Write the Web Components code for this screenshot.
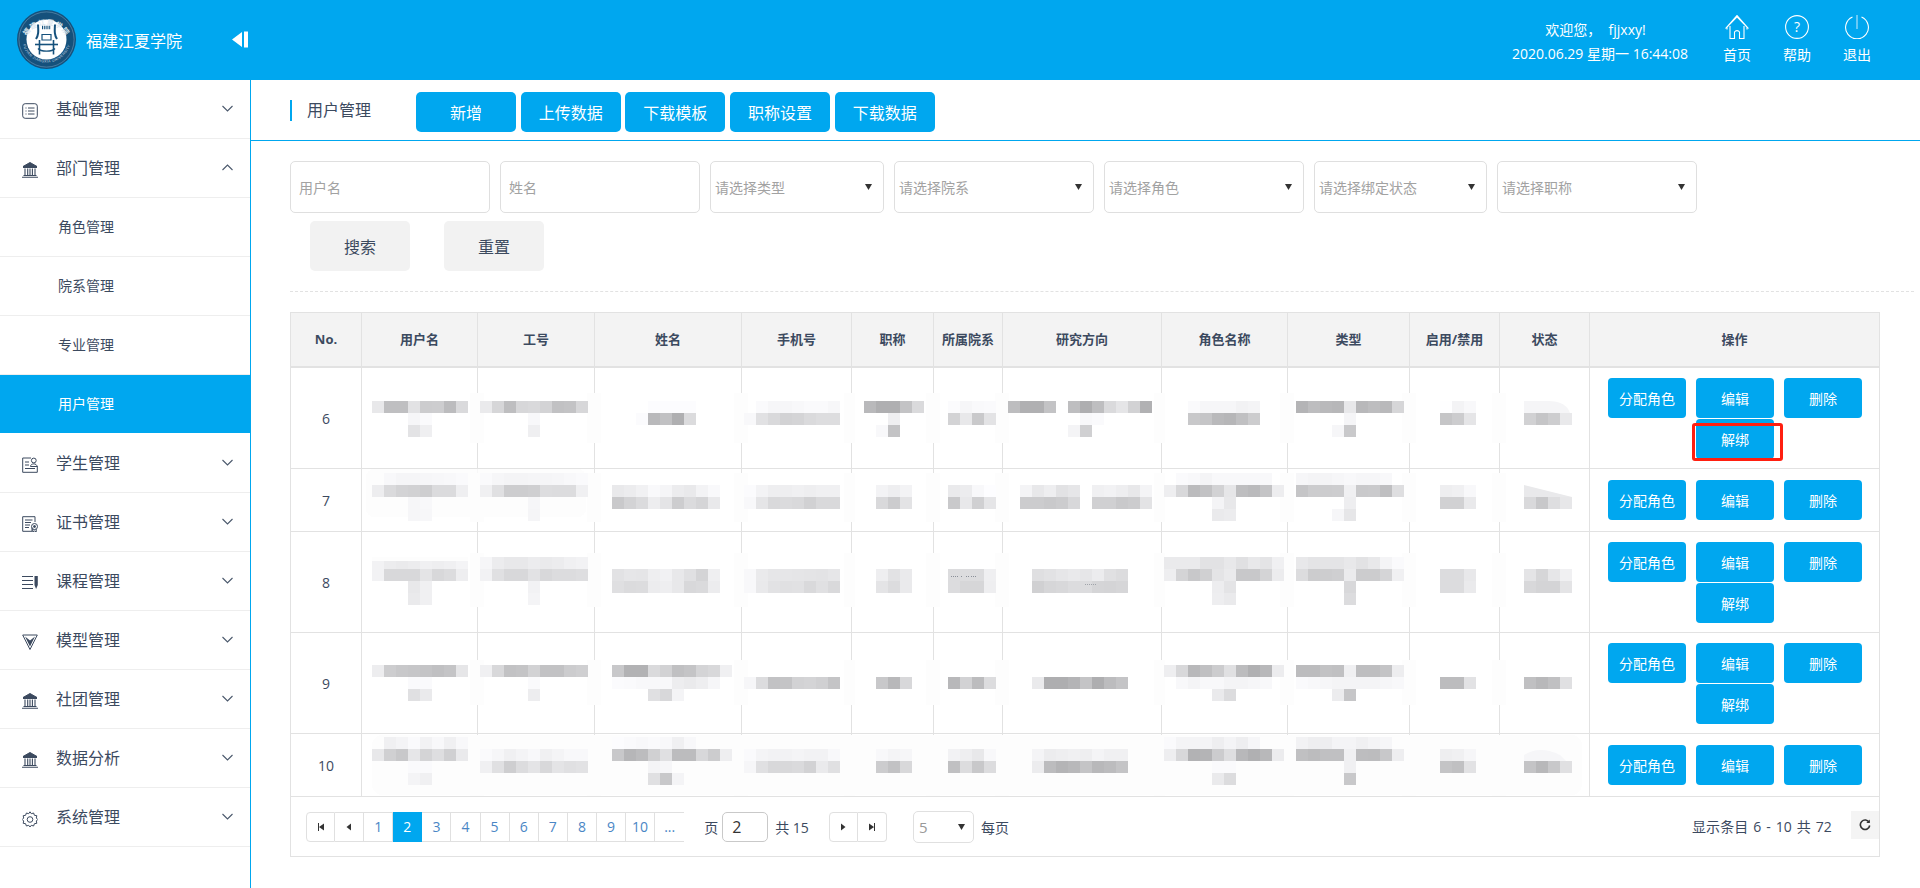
<!DOCTYPE html>
<html lang="zh-CN">
<head>
<meta charset="utf-8">
<title>用户管理</title>
<style>
html,body{margin:0;padding:0;background:#fff;width:1920px;height:888px;overflow:hidden;font-family:"Open Sans","Noto Sans CJK SC",sans-serif;color:#3c4a5f}
</style>
</head>
<body>
<app-shell>
  <app-header slot="header"></app-header>
  <side-nav slot="nav">
    <nav-item icon="list">基础管理</nav-item>
    <nav-item icon="bank" open>部门管理</nav-item>
    <nav-sub>角色管理</nav-sub>
    <nav-sub>院系管理</nav-sub>
    <nav-sub>专业管理</nav-sub>
    <nav-sub active>用户管理</nav-sub>
    <nav-item icon="student">学生管理</nav-item>
    <nav-item icon="cert">证书管理</nav-item>
    <nav-item icon="course">课程管理</nav-item>
    <nav-item icon="model">模型管理</nav-item>
    <nav-item icon="bank">社团管理</nav-item>
    <nav-item icon="bank">数据分析</nav-item>
    <nav-item icon="gear">系统管理</nav-item>
  </side-nav>
  <page-toolbar slot="main" title="用户管理">
    <blue-btn>新增</blue-btn><blue-btn>上传数据</blue-btn><blue-btn>下载模板</blue-btn><blue-btn>职称设置</blue-btn><blue-btn>下载数据</blue-btn>
  </page-toolbar>
  <filter-bar slot="main">
    <filter-field w="200" pad="9">用户名</filter-field>
    <filter-field w="200" pad="9">姓名</filter-field>
    <filter-field w="174" select>请选择类型</filter-field>
    <filter-field w="200" select>请选择院系</filter-field>
    <filter-field w="200" select>请选择角色</filter-field>
    <filter-field w="173" select>请选择绑定状态</filter-field>
    <filter-field w="200" select>请选择职称</filter-field>
    <gray-btn slot="actions">搜索</gray-btn>
    <gray-btn slot="actions">重置</gray-btn>
  </filter-bar>
  <data-table slot="main"></data-table>
</app-shell>

<script>
function comp(name, css, html, init){
  customElements.define(name, class extends HTMLElement{
    connectedCallback(){
      if(this.shadowRoot) return;
      const r=this.attachShadow({mode:'open'});
      r.innerHTML='<style>'+css+'</style>'+(typeof html==='function'?html(this):html);
      if(init) init(this,r);
    }
  });
}
const BLUE='#00a7ef';

comp('app-shell',`
:host{display:flex;flex-direction:column;width:1920px;height:888px}
.body{display:flex;flex:1;min-height:0}
.nav{display:block;width:250px;border-right:1px solid ${BLUE};flex:none}
.main{flex:1;min-width:0;display:flex;flex-direction:column}
`,`<slot name="header"></slot><div class="body"><div class="nav"><slot name="nav"></slot></div><div class="main"><slot name="main"></slot></div></div>`);

comp('app-header',`
:host{display:flex;height:80px;background:${BLUE};color:#fff;align-items:stretch;font-size:14px}
.logo{width:59px;height:59px;margin:10px 0 0 17px;flex:none}
.name{font-size:16px;margin-left:10px;line-height:22px;padding-top:30px;width:146px;flex:none}
.toggle{width:17px;height:17px;margin-top:31px;flex:none}
.sp{flex:1}
.welcome{display:flex;flex-direction:column;align-items:center;width:190px;padding-top:18px;line-height:24px;margin-right:12px;flex:none;white-space:pre}
.welcome div:first-child{margin-right:9px}
.acts{display:flex;padding-right:33px}
.act{width:60px;display:flex;flex-direction:column;align-items:center;padding-top:15px}
.act svg{width:24px;height:24px;display:block}
.act span{margin-top:6px;line-height:20px}
`,`
<svg class="logo" viewBox="0 0 59 59">
  <defs>
    <path id="ringTop" d="M7 33 A23 23 0 0 1 52 33"/>
    <path id="ringBot" d="M5.500 33 A24.500 24.500 0 0 0 53.500 33"/>
  </defs>
  <circle cx="29.500" cy="29.500" r="29.500" fill="#15517c"/>
  <circle cx="29.500" cy="29.500" r="27.600" fill="none" stroke="#7fa6c2" stroke-width=".5"/>
  <circle cx="29.500" cy="29.500" r="20" fill="#fff"/>
  <text font-family="Noto Sans CJK SC" font-size="7" font-weight="700" fill="#dfe9f0" letter-spacing="1"><textPath href="#ringTop" startOffset="50%" text-anchor="middle">福建江夏学院</textPath></text>
  <text font-family="Liberation Sans" font-size="3.600" fill="#cfdde8" letter-spacing=".4"><textPath href="#ringBot" startOffset="50%" text-anchor="middle">FUJIAN JIANGXIA UNIVERSITY</textPath></text>
  <g fill="none" stroke="#15517c" stroke-width="2">
    <path d="M21 14.500C21.500 22 21.500 25 19 29"/><path d="M38 14.500C37.500 22 37.500 25 40 29"/>
    <path d="M18 34.500H41" stroke-width="1.600"/>
    <path d="M22.500 30V44.500M36.500 30V44.500" stroke-width="1.600"/>
    <path d="M25 24.500H34V30H25Z" stroke-width="1.200"/>
    <path d="M25 17.500H34" stroke-dasharray="1.200 1" stroke-width="3.500"/>
    <path d="M21 38.500C24 42 35 42 38 38.500" stroke-width="1.300"/>
  </g>
</svg>
<div class="name">福建江夏学院</div>
<svg class="toggle" viewBox="0 0 17 17"><path d="M10 1V16L0 8.500Z M12 0.500H16V16.500H12Z" fill="#fff"/></svg>
<div class="sp"></div>
<div class="welcome"><div>欢迎您，  fjjxxy!</div><div>2020.06.29 星期一 16:44:08</div></div>
<div class="acts">
  <div class="act"><svg viewBox="0 0 24 24" fill="none" stroke="#fff" stroke-width="1.100"><path d="M.5 13.500 12 .5 23.500 13.500M2 14.500V12L12 1.800 22 12V14.500"/><path d="M5 11V23.500H9.500V17A3 3 0 0 1 14.500 17V23.500H19V11"/></svg><span>首页</span></div>
  <div class="act"><svg viewBox="0 0 24 24" fill="none" stroke="#fff" stroke-width="1.100"><circle cx="12" cy="12" r="11.400"/><text x="12" y="17" text-anchor="middle" font-size="14" font-family="Open Sans" fill="#fff" stroke="none">?</text></svg><span>帮助</span></div>
  <div class="act"><svg viewBox="0 0 24 24" fill="none" stroke="#fff" stroke-width="1.100"><path d="M7.500 2A11.400 11.400 0 1 0 16.500 2"/><path d="M12 0V14" stroke="#bfe8fb"/></svg><span>退出</span></div>
</div>`);

comp('side-nav',`:host{display:block}`,`<slot></slot>`);

const ICONS={
 list:'<rect x=".7" y=".7" width="14.600" height="14.600" rx="2.500"/><path d="M3.500 5H4.500M6 5H12.500M3.500 8H4.500M6 8H12.500M3.500 11H4.500M6 11H12.500"/>',
 bank:'<path d="M8 .5 15 4.500H1Z" fill="currentColor"/><path d="M1 5.500H15" /><path d="M3 6.500V13M5.700 6.500V13M8 6.500V13M10.400 6.500V13M13 6.500V13" stroke-width="1.100"/><path d="M1.500 13.500H14.500M0 15.300H16" stroke-width="1.100"/>',
 student:'<path d="M9 1H.7V15.300H15.300V9"/><circle cx="11.800" cy="3.500" r="2.400"/><path d="M8.500 9.500C8.500 6 15 6 15 9.500ZM3 5H7M3 8H7M3 11.500H13"/>',
 cert:'<path d="M10 11.500V15.300H.7V.7H13V6"/><path d="M3 4H10.500M3 6.500H9M3 9H8M3 11.500H7"/><circle cx="12.500" cy="10.500" r="3"/><circle cx="12.500" cy="10.500" r="1" fill="currentColor"/><path d="M10.800 13V16L12.500 15 14.200 16V13"/>',
 course:'<path d="M0 1.500H11M0 5.500H11M0 9.500H11M0 13.500H11" stroke-width="1.100"/><path d="M12.500 1H15.800V10L14.100 14 12.500 10Z" fill="currentColor" stroke="none"/>',
 model:'<path d="M.7 1H15.300L8 15.500Z"/><path d="M3 2.500 8 6.500 13 2.500 8 12.500Z" fill="currentColor" stroke="none"/><path d="M5.500 3 8 4.800 10.500 3" stroke="#fff"/>',
 gear:'<path d="M8 .8 9.300 2.700 11.600 2 12.400 4.300 14.800 4.700 14.300 7 15.800 8.500 14.300 10 14.800 12.300 12.400 12.700 11.600 15 9.300 14.300 8 16 6.700 14.300 4.400 15 3.600 12.700 1.200 12.300 1.700 10 .2 8.500 1.700 7 1.200 4.700 3.600 4.300 4.400 2 6.700 2.700Z" stroke-linejoin="round"/><circle cx="8" cy="8.500" r="2.800"/>'
};
comp('nav-item',`
:host{display:flex;align-items:center;height:58px;border-bottom:1px solid #eeeeee;color:#3c4a5f;font-size:16px;padding-left:22px;box-sizing:content-box}
svg.i{width:16px;height:16px;flex:none;margin-right:18px;fill:none;stroke:currentColor;stroke-width:1;position:relative;top:2px}
.t{flex:1;line-height:22px}
svg.c{width:11px;height:7px;margin-right:17px;fill:none;stroke:#4a586c;stroke-width:1.100;flex:none;position:relative;top:-1px}
`,h=>`<svg class="i" viewBox="0 0 16 16">${ICONS[h.getAttribute('icon')]}</svg><div class="t"><slot></slot></div><svg class="c" viewBox="0 0 11 7"><path d="${h.hasAttribute('open')?'M.5 6 5.500 1 10.500 6':'M.5 1 5.500 6 10.500 1'}"/></svg>`);

comp('nav-sub',`
:host{display:flex;align-items:center;height:56px;padding-bottom:2px;border-bottom:1px solid #eeeeee;font-size:14px;padding-left:58px;color:#3c4a5f}
:host([active]){background:${BLUE};color:#fff;border-bottom-color:#fff}
`,`<slot></slot>`);

comp('page-toolbar',`
:host{display:flex;align-items:center;height:60px;border-bottom:1px solid ${BLUE};padding-left:39px;flex:none}
.title{border-left:2px solid ${BLUE};padding-left:15px;width:109px;height:21px;line-height:21px;font-size:16px;color:#3c4a5f;flex:none;white-space:nowrap}
.btns{display:flex;gap:4.700px;margin-top:4px}
`,h=>`<div class="title">${h.getAttribute('title')}</div><div class="btns"><slot></slot></div>`);

comp('blue-btn',`
:host{display:flex;align-items:center;justify-content:center;width:100px;height:40px;background:${BLUE};border-radius:5px;color:#fff;font-size:16px;flex:none}
`,`<slot></slot>`);

comp('gray-btn',`
:host{display:flex;align-items:center;justify-content:center;width:100px;height:50px;background:#f2f2f2;border-radius:5px;color:#3c4a5f;font-size:16px;flex:none}
`,`<slot></slot>`);

comp('filter-bar',`
:host{display:block;padding:20px 6px 0 39px;flex:none}
.row{display:flex;gap:10px}
.acts{display:flex;gap:34px;margin:8px 0 0 20px}
.dash{border-top:1px dashed #e2e2e2;margin-top:20px}
`,`<div class="row"><slot></slot></div><div class="acts"><slot name="actions"></slot></div><div class="dash"></div>`);

comp('filter-field',`
:host{display:flex;align-items:center;justify-content:space-between;height:52px;box-sizing:border-box;border:1px solid #dfdfdf;border-radius:5px;color:#a2a2a2;font-size:14px;flex:none}
svg{width:7px;height:6px;margin-right:11px;flex:none}
`,h=>{
  h.style.width=h.getAttribute('w')+'px';
  const sel=h.hasAttribute('select');
  h.style.paddingLeft=(h.getAttribute('pad')||5)-1+'px';
  return `<div><slot></slot></div>`+(sel?`<svg viewBox="0 0 7 6"><path d="M0 0H7L3.500 6Z" fill="#333"/></svg>`:'');
});

comp('op-btn',`
:host{display:flex;align-items:center;justify-content:center;width:78px;height:40px;background:${BLUE};border-radius:4px;color:#fff;font-size:14px;flex:none;position:relative}
.mark{position:absolute;left:-4px;top:4px;width:91px;height:38px;box-sizing:border-box;border:3px solid #ff1f10;border-radius:3px}
`,h=>`<slot></slot>`+(h.hasAttribute('marked')?'<div class="mark"></div>':''));

comp('mosaic-overlay',`
:host{display:block;position:absolute;left:0;top:0;width:1590px;height:545px;pointer-events:none}
svg{display:block}
`,()=>{
 const D=`
401 372 e8 bf bf e2 cc cd bc da|413 408 f6 fa|425 408 e3 ef|401 480 ea d6 be d7 d9 d3 c1 c3 d7|413 528 f8|425 528 ef
401 648 fc fc fc fc|413 636 fb b9 c1 af db|401 756 fa f6 f6 f8 fa fa f7|413 744 f8 e1 d9 d2 d4 da dd dd
401 864 b9 af af c3 da|413 888 ef|425 876 f8 c3|401 948 fb f6 f9 fa|413 948 d3 e8 c9 e3
401 1008 bd b0 b0 c3|401 1068 be ae be da e5 d2 b1|413 1080 f8 fa|425 1068 f4 d0
401 1188 fa f6 f6 f6 f2 f4|413 1188 c8 c5 b9 b6 c0 cc|401 1296 b4 bd b9 b7 e8 b8 bd b9 d6|413 1344 f5|425 1332 f6 c9
401 1440 fe f3 f8|413 1440 c5 cc e5|413 1524 d1 c5 cd e9
473 384 f8 f5 f5 f6 f7 f8 fa|485 372 ed da d3 d1 ce db db ef|497 408 f6 f8|509 408 f6 f7|473 480 fa f6 f4 f4 f5 f5 f6 f8 fa|485 480 f0 e0 cd cd cf dd dc dc f0|497 528 f6|509 528 f5
485 612 e9 ec f1 f9 f5 ec e9 f3 f9|497 612 c9 d3 db ed e4 cd db d5 e9|485 744 fb f3 ee ee f0 ee f0 f0|497 744 f8 e5 d9 db d9 d1 d9 d9
485 876 f3 ee f3|497 876 d9 cc e3|485 948 ea ec f8 fd|497 948 c9 e8 d0 e5
485 1020 f4 e8 ee e2 e6 ff f0 f2 ee e8 f4|497 1020 cc cc c9 cc d8 ff d0 d0 c9 cc e3
473 1176 fa f8 f4 f8 f8 f8 f8 f8|485 1164 ee d8 bb c2 d2 e6 be ba c4 ed|497 1212 f4 e8|509 1212 ea ec
473 1296 f6 f4 f4 f6 f8 f6 f6 f8|485 1296 c5 cc cc cd f0 c9 ca bf de|497 1344 ee|509 1332 f6 e6
485 1440 ee f0 f8|497 1440 d1 d1 e9|497 1524 d9 c8 de e7
557 372 f2 ec ea ec f0 ee f0 f4|569 372 f2 d8 d8 d8 e4 d8 dc ee|581 408 e8 f0|593 408 ea f0|557 480 f6 ec e8 e8 ec ea ec f0 f2|569 480 f2 e0 d8 d8 e2 d8 dc dc de|581 528 f2|593 528 f4
569 612 e2 e6 e5 ee f1 e8 e0 d4 ef|581 612 df db dc ec ee e8 d8 da ec|569 744 f8 ea e6 e6 e5 e4 e3 e6|581 744 f8 e9 e2 e0 e1 d9 e0 d9
569 876 ee e2 ea|581 876 e4 dc ea|569 948 dc dc dc ef|581 948 dc d6 d6 ee
569 1032 df e2 e6 e9 e6 ec e0 dc|581 1032 d0 d6 d8 dc dc d5 d4 d6
557 1164 ea ea ea e2 e2 e8 e0 e8 e4 f0|569 1164 ee d4 c8 d0 e4 ea c8 c8 d4 ec|581 1212 ed e4|593 1212 ee ea
557 1296 e8 e4 e4 e4 e8 e2 e8 f4 fa|569 1296 dc cc cd cf eb cc cc d5 f0|581 1344 d8|593 1344 dc
569 1440 dc dc e8|581 1440 dc dc ea|569 1524 e4 d6 e6 f0|581 1524 d8 d4 d4 e4
665 372 ed cd c8 c6 c4 c0 c4 e6|677 408 fa fa|689 408 e0 ea|665 480 f0 d8 c2 c4 d2 c2 c2 cc cf|677 528 fa|689 528 ed
665 612 c8 b2 b2 da d2 c0 c4 d4 d8 f0|677 612 fb fa f8 f8 f8 ed ea ee f6|689 648 e0 d8 f4|677 744 f6 dc c2 c4 d2 d4 d0 c4
677 876 c8 b8 d8|677 948 b8 d2 bc dc|677 1032 ea ae ae b4 c4 ae bc c4
665 1164 ee d8 b8 c0 cc e0 bc b0 b8 ec|677 1176 f8 f4 f8 f8 f4 f4 f6 f8|689 1212 ea dc
665 1296 bc bc c2 c0 f0 be be c4 ed|677 1296 fa f8 f6 f4 f4 f4 f4 f6 f8|689 1332 ec c6
677 1440 bc bc e2|677 1524 c0 b8 c0 e0
737 384 f0 f4 fa f2 f8 f0 f8|749 372 e8 d0 c8 e6 d4 de d0 ea|761 408 fa fa|773 408 f4 f0|749 480 fa f6 f0 f4 f8 f0 f4 f8 f8|761 480 f0 e0 ce dc e4 d8 e4 e0 e2
737 612 fc fa f8 fa f8 f0 f8|749 612 c8 b6 bc d0 e0 bc bc d8 cc ee|761 648 f4 f6|773 648 e0 c8 f4|749 744 fa f4 f2 f2 f4 f2 f2 f8|761 744 f6 e0 d8 d8 da d2 ea e0
749 876 f8 f4 f6|761 876 cc c2 d8|749 948 f2 ee e8 f8|761 948 c0 dc c8 dc
749 1032 f4 ec ee f0 ee f4 f0 f0|761 1032 ec bc b4 b8 c4 b8 bc c4
737 1164 fa f4 f4 f4 ee f4 ee f6|749 1164 ee d8 b2 b4 cc de b8 b0 b8 ec|761 1212 fa fa|773 1212 ea dc
737 1296 f2 ee ee f4 f4 f0 f4 f6|749 1296 c0 bc c0 c0 f0 bd bc c8 ee|761 1344 f0|773 1344 c8
749 1440 ee f0 f6|761 1440 c4 c0 e2|761 1524 c4 b8 c8 e0`;
 const lines=[477,594,741,851,933,1002,1161,1287,1409,1499];
 const spans=[[393,443],[473,522],[553,607],[660,705],[738,796]];
 let s='';
 for(const [a,b] of spans) for(const x of lines) s+=`<rect x="${x-7}" y="${a}" width="${x===851||x===1161?11:14}" height="${b-a}" fill="#fdfdfd"/>`;
 s+='<rect x="372" y="735" width="1210" height="60" rx="10" fill="#fdfdfd"/>';
 s+='<rect x="366" y="469" width="220" height="48" rx="8" fill="#fdfdfd" opacity=".8"/>';
 for(const rec of D.trim().split(/[|\n]/)){
   const p=rec.trim().split(/\s+/), y=+p[0], x=+p[1];
   p.slice(2).forEach((v,i)=>{ if(v==='ff') return; const g=parseInt(v,16);
     s+=`<rect x="${x+i*12}" y="${y}" width="12" height="12" fill="rgb(${g},${g},${Math.min(255,g+2)})"/>`; });
 }
 s+='<rect x="372" y="557" width="96" height="4" fill="#fdfdfd"/>';
 s+='<path d="M1524 401H1548Q1566 401 1570 413H1524Z" fill="#f5f5f7" shape-rendering="auto"/>';
 s+='<path d="M1524 485 1572 497H1524Z" fill="#e9e9eb" shape-rendering="auto"/>';
 s+='<path d="M1524 761V755Q1540 745 1560 755L1566 761Z" fill="#f6f6f8" shape-rendering="auto"/>';
 s+='<path d="M951 576.500h3m1 0h4m2 0h2m3 0h4m1 0h5" stroke="#8a8f98" stroke-width="1" stroke-dasharray="1 1"/><path d="M1085 584.500h12" stroke="#a0a4aa" stroke-dasharray="1 1"/>';
 return `<svg width="1590" height="545" viewBox="290 312 1590 545" shape-rendering="crispEdges">${s}</svg>`;
});

comp('pager-bar',`
:host{display:flex;align-items:center;height:59px;font-size:14px;color:#3c4a5f;padding-left:15px;position:relative}
.pg{display:flex;height:30px;box-sizing:border-box}
.pg div{width:29.100px;box-sizing:border-box;height:30px;border:1px solid #e0e0e0;border-left:0;display:flex;align-items:center;justify-content:center;color:#4a86c5}
.pg div:first-child{border-left:1px solid #e0e0e0;border-radius:4px 0 0 4px}
.pg div.end{border-radius:0 4px 4px 0}
.pg div.a{background:${BLUE};color:#fff;border-color:${BLUE}}
.pg div.o{border-right:0}
svg{width:8px;height:8px;fill:#333}
.lb{white-space:nowrap}
.inp{width:46px;height:30px;box-sizing:border-box;border:1px solid #c9c9c9;border-radius:5px;padding-left:9px;font-size:16px;line-height:28px;margin:0 7px 0 4px;color:#333}
.sel{width:61px;height:32px;box-sizing:border-box;border:1px solid #e0e0e0;border-radius:5px;margin-left:26px;display:flex;align-items:center;justify-content:space-between;padding:0 8px 0 5px;color:#999;font-size:15px}
.sel svg{width:7px;height:6px}
.right{margin-left:auto;display:flex;align-items:center;height:100%}
.ref{width:28px;height:28px;background:#f4f4f4;margin-left:19px;display:flex;align-items:center;justify-content:center;margin-top:-3px}
.ref svg{width:12px;height:12px;fill:none;stroke:#333;stroke-width:1.600}
`,`
<div class="pg">
  <div><svg viewBox="0 0 8 8"><path d="M1 0H2V8H1ZM7 .5V7.500L2 4Z"/></svg></div>
  <div><svg viewBox="0 0 8 8"><path d="M6 .5V7.500L1.500 4Z"/></svg></div>
  <div>1</div><div class="a">2</div><div>3</div><div>4</div><div>5</div><div>6</div><div>7</div><div>8</div><div>9</div><div>10</div><div class="o">...</div>
</div>
<span class="lb" style="margin-left:20px">页</span><div class="inp">2</div><span class="lb">共 15</span>
<div class="pg" style="margin-left:20px">
  <div><svg viewBox="0 0 8 8"><path d="M2 .5V7.500L6.500 4Z"/></svg></div>
  <div class="end"><svg viewBox="0 0 8 8"><path d="M1 .5V7.500L6 4ZM6 0H7V8H6Z"/></svg></div>
</div>
<div class="sel"><span>5</span><svg viewBox="0 0 7 6"><path d="M0 0H7L3.500 6Z"/></svg></div>
<span class="lb" style="margin-left:7px">每页</span>
<div class="right"><span class="lb" style="margin-top:-2px;letter-spacing:.15px;word-spacing:1px">显示条目 6 - 10 共 72</span><div class="ref"><svg viewBox="0 0 12 12"><path d="M10.200 3.500A4.700 4.700 0 1 0 10.700 6.500"/><path d="M10.800 .5V4H7.300Z" fill="#333" stroke="none"/></svg></div></div>
`);

comp('data-table',`
:host{display:block;position:relative;width:1590px;margin:20px 0 0 39px;flex:none;color:#3c4a5f;font-size:14px}
.t{display:grid;grid-template-columns:71px 116px 117px 147px 110px 82px 69px 159px 126px 122px 90px 90px 289px;
   grid-template-rows:55px 101px 63px 101px 101px 63px;border:1px solid #e2e2e2;border-bottom:0;box-sizing:border-box}
.h{background:#f3f3f3;font-weight:700;font-size:13px;display:flex;align-items:center;justify-content:center;border-right:1px solid #e2e2e2;border-bottom:2px solid #e2e2e2;white-space:nowrap;color:#3c4a5f;padding-bottom:2px;box-sizing:border-box}
.h:nth-child(13){border-right:0}
.c{border-right:1px solid #e2e2e2;border-bottom:1px solid #e2e2e2;display:flex;align-items:center;justify-content:center;box-sizing:border-box}
.op{border-right:0;flex-wrap:wrap;align-content:flex-start;justify-content:center;gap:1px 10px;padding-left:1px}
.foot{border:1px solid #e2e2e2;border-top:0;box-sizing:border-box;height:60px}
`,()=>{
 const heads=['No.','用户名','工号','姓名','手机号','职称','所属院系','研究方向','角色名称','类型','启用/禁用','状态','操作'];
 const rows=[[6,10,1],[7,11,0],[8,10,1],[9,10,1],[10,11,0]];
 let h=heads.map(t=>`<div class="h">${t}</div>`).join('');
 rows.forEach(([n,pt,un],ri)=>{
   h+=`<div class="c">${n}</div>`;
   for(let i=0;i<11;i++) h+='<div class="c"></div>';
   h+=`<div class="c op" style="padding-top:${pt}px"><op-btn>分配角色</op-btn><op-btn>编辑</op-btn><op-btn>删除</op-btn>${un?`<op-btn${ri===0?' marked':''}>解绑</op-btn>`:''}</div>`;
 });
 return `<div class="t">${h}</div><div class="foot"><pager-bar></pager-bar></div><mosaic-overlay></mosaic-overlay>`;
});
</script>
</body>
</html>
